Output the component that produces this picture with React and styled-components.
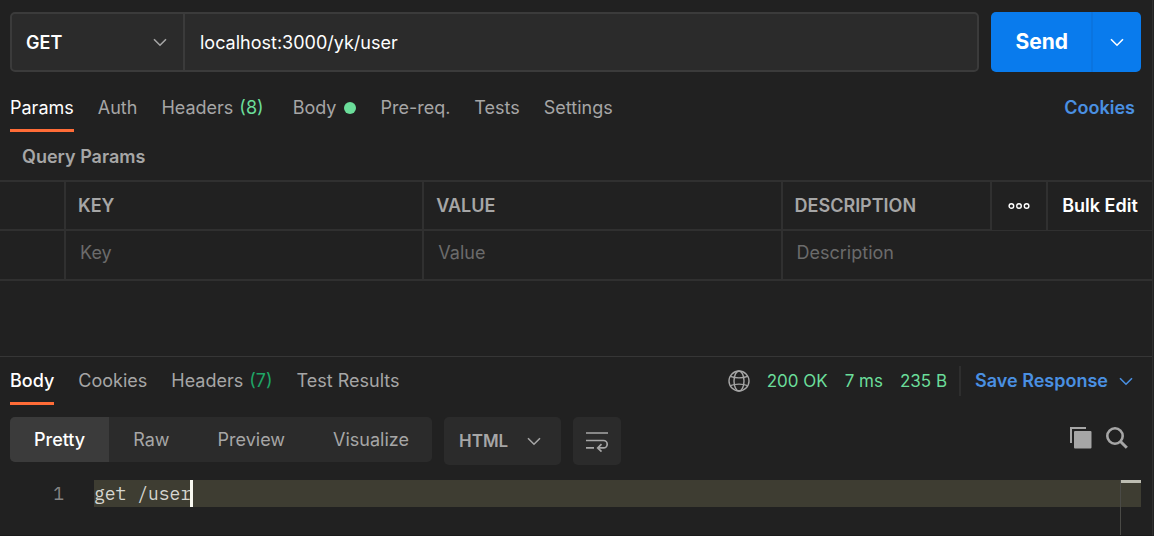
import React, { useState } from 'react';
import styled, { createGlobalStyle } from 'styled-components';

const GlobalStyle = createGlobalStyle`
  * {
    box-sizing: border-box;
  }

  body {
    margin: 0;
    background-color: #212121;
    color: #a6a6a6;
    font-family: Inter, 'Liberation Sans', sans-serif;
    font-size: 18px;
    line-height: 24px;
  }

  button,
  input,
  select {
    margin: 0;
    padding: 0;
    border: none;
    background: none;
    color: inherit;
    font: inherit;
    outline: none;
  }

  button,
  select {
    cursor: pointer;
  }
`;

const Page = styled.main`
  display: flex;
  flex-direction: column;
  min-height: 100vh;
  margin-right: 1px;
  border-right: 1px solid #2f2f2f;
  border-bottom: 1px solid #1a1a1a;
`;

const RequestBar = styled.form`
  display: flex;
  gap: 12px;
  padding: 12px 11px 12px 10px;
`;

const UrlBox = styled.div`
  display: flex;
  flex: 1;
  height: 60px;
  background-color: #2b2b2b;
  border: 2px solid #3b3b3b;
  border-radius: 5px;
`;

const SelectFrame = styled.div`
  display: grid;
  align-items: center;
  flex-shrink: 0;
  width: ${props => props.$width}px;

  > * {
    grid-area: 1 / 1;
  }

  > svg {
    justify-self: end;
    margin-right: 16px;
    pointer-events: none;
  }
`;

const MethodFrame = styled(SelectFrame)`
  color: #fff;
  border-right: 2px solid #3b3b3b;

  > svg {
    color: #a6a6a6;
  }
`;

const Select = styled.select`
  appearance: none;
  width: 100%;
  height: 100%;
  padding-top: ${props => (props.$small ? 0 : 2)}px;
  padding-left: ${props => (props.$small ? 15 : 14)}px;
  font-size: ${props => (props.$small ? 17 : 18)}px;
  font-weight: 600;
`;

const UrlInput = styled.input`
  flex: 1;
  min-width: 0;
  padding: 2px 15px 0;
  color: #fff;
`;

const SendGroup = styled.div`
  display: flex;
  background-color: #097bed;
  border-radius: 5px;
  color: #fff;
`;

const SendButton = styled.button`
  padding: 0 23px 0 24px;
  font-size: 21px;
  font-weight: 700;
`;

const SendMore = styled.button`
  display: flex;
  align-items: center;
  justify-content: center;
  width: 50px;
  border-left: 2px solid #0a74e0;
`;

const TabBar = styled.div`
  display: flex;
  align-items: center;
  justify-content: space-between;
  padding: 0 17px 0 10px;
`;

const Tabs = styled.div`
  display: flex;
  gap: 24px;
`;

const Tab = styled.button`
  display: flex;
  align-items: center;
  height: 48px;
  padding-top: 3px;
  border-bottom: 3px solid ${props => (props.$active ? '#ff6c37' : 'transparent')};
  color: ${props => (props.$active ? '#fff' : '#a6a6a6')};
  font-weight: ${props => (props.$strong && props.$active ? 500 : 400)};
  white-space: nowrap;
`;

const Count = styled.span`
  margin-left: 6px;
  margin-right: ${props => (props.$spaced ? 5 : 0)}px;
  color: ${props => props.$color};
`;

const Dot = styled.span`
  width: 12px;
  height: 12px;
  margin-left: 8px;
  border-radius: 50%;
  background-color: #6bdd9a;
`;

const CookiesLink = styled.a`
  color: #4a90e2;
  font-weight: 600;
  text-decoration: none;
`;

const SectionTitle = styled.h2`
  margin: 0;
  padding: 13px 22px 11px;
  font-size: 18px;
  font-weight: 600;
  line-height: 24px;
`;

const ParamsTable = styled.table`
  width: 100%;
  table-layout: fixed;
  border-collapse: separate;
  border-spacing: 0;
  border-top: 2px solid #303030;

  th,
  td {
    padding: 0 12px;
    border-bottom: 2px solid #303030;
    border-left: 2px solid #303030;
    text-align: left;
  }

  th {
    height: 49px;
    font-weight: 600;
  }

  td {
    height: 50px;
    padding-bottom: 4px;
  }

  th:first-child,
  td:first-child {
    border-left: none;
  }
`;

const ActionCell = styled.th`
  && {
    padding: 0;
    border-bottom-width: 1px;
  }
`;

const CellButton = styled.button`
  display: flex;
  align-items: center;
  justify-content: center;
  width: 100%;
  height: 46px;
  color: #fff;
  font-weight: 600;
  white-space: nowrap;
`;

const CellInput = styled.input`
  display: block;
  width: 100%;
  padding-left: 2px;

  &::placeholder {
    color: #6b6b6b;
    opacity: 1;
  }
`;

const Response = styled.section`
  display: flex;
  flex: 1;
  flex-direction: column;
  margin-top: 75px;
  border-top: 1px solid #363636;
`;

const Status = styled.div`
  display: flex;
  align-items: center;
  gap: 17px;
  color: #6bdd9a;
  font-size: 17px;
  white-space: nowrap;
`;

const GlobeButton = styled.button`
  display: flex;
  color: #a6a6a6;
`;

const SaveButton = styled.button`
  display: flex;
  align-items: center;
  gap: 11px;
  height: 30px;
  margin-left: -5px;
  padding: 0 2px 0 14px;
  border-left: 2px solid #2e2e2e;
  color: #4a90e2;
  font-size: 18px;
  font-weight: 600;
`;

const Toolbar = styled.div`
  display: flex;
  align-items: flex-start;
  gap: 12px;
  padding: 12px 23px 15px 10px;
`;

const Segments = styled.div`
  display: flex;
  overflow: hidden;
  border-radius: 5px;
  background-color: #2b2b2b;
`;

const Segment = styled.button`
  height: 45px;
  padding: 0 24px;
  background-color: ${props => (props.$active ? '#3b3b3b' : 'transparent')};
  color: ${props => (props.$active ? '#fff' : '#a6a6a6')};
  font-weight: ${props => (props.$active ? 500 : 400)};

  &:last-child {
    padding-right: 23px;
  }
`;

const LanguageFrame = styled(SelectFrame)`
  height: 48px;
  border-radius: 5px;
  background-color: #2b2b2b;

  > svg {
    margin-right: 20px;
  }
`;

const WrapButton = styled.button`
  display: flex;
  align-items: center;
  justify-content: center;
  width: 48px;
  height: 48px;
  border-radius: 5px;
  background-color: #2b2b2b;
`;

const Tools = styled.div`
  display: flex;
  gap: 12px;
  margin-left: auto;
  padding-top: 9px;
`;

const ToolButton = styled.button`
  display: flex;
`;

const Editor = styled.div`
  display: flex;
  flex: 1;
  padding-right: 11px;
  font-family: 'IBM Plex Mono', 'Liberation Mono', monospace;
  line-height: 27px;
`;

const LineNumber = styled.div`
  width: 94px;
  padding-right: 30px;
  color: #858585;
  text-align: right;
`;

const CodeLine = styled.div`
  display: flex;
  flex: 1;
  height: 27px;
  background-color: #3e3d32;
  color: #d6d6d0;
`;

const Caret = styled.span`
  width: 3px;
  height: 27px;
  margin-left: -1px;
  background-color: #f8f8f0;
`;

const Ruler = styled.div`
  width: 21px;
  border-left: 1px solid #4a4a46;
`;

const RulerMark = styled.div`
  height: 27px;
  border-top: 3px solid #bdbdb2;
  background-color: #3e3d32;
`;

function Chevron() {
  return (
    <svg width="14" height="9" viewBox="0 0 14 9" fill="none" aria-hidden="true">
      <path d="M1 1.2l6 6 6-6" stroke="currentColor" strokeWidth="1.6" />
    </svg>
  );
}

function MoreIcon() {
  return (
    <svg width="22" height="8" viewBox="0 0 22 8" fill="none" stroke="currentColor" strokeWidth="1.4">
      <circle cx="3.4" cy="4" r="2.3" />
      <circle cx="11" cy="4" r="2.3" />
      <circle cx="18.6" cy="4" r="2.3" />
    </svg>
  );
}

function GlobeIcon() {
  return (
    <svg width="22" height="22" viewBox="0 0 22 22" fill="none" stroke="currentColor" strokeWidth="1.4">
      <circle cx="11" cy="11" r="10" />
      <ellipse cx="11" cy="11" rx="5" ry="10" />
      <path d="M2.2 6.4c5 1.7 12.6 1.7 17.6 0M2.2 15.6c5-1.7 12.6-1.7 17.6 0" />
    </svg>
  );
}

function WrapIcon() {
  return (
    <svg width="24" height="22" viewBox="0 0 24 22" fill="none" stroke="currentColor" strokeWidth="1.7">
      <path d="M1 3h22M1 10.5h17.5a3.7 3.7 0 0 1 0 7.4H13M1 17.9h8" />
      <path d="M16.5 14.2l-3.8 3.7 3.8 3.7" />
    </svg>
  );
}

function CopyIcon() {
  return (
    <svg width="24" height="24" viewBox="0 0 24 24" fill="currentColor">
      <path d="M1 1h16v2H3v14H1z" />
      <rect x="5" y="5" width="17.5" height="17.5" rx="1" />
    </svg>
  );
}

function SearchIcon() {
  return (
    <svg width="24" height="24" viewBox="0 0 24 24" fill="none" stroke="currentColor" strokeWidth="2.6">
      <circle cx="10" cy="10" r="7.7" />
      <path d="M15.5 15.5l6.3 6.3" strokeWidth="3" />
    </svg>
  );
}

const requestTabs = [
  { name: 'Params' },
  { name: 'Auth' },
  { name: 'Headers', count: 8 },
  { name: 'Body', dot: true },
  { name: 'Pre-req.' },
  { name: 'Tests' },
  { name: 'Settings' }
];

const responseTabs = [
  { name: 'Body' },
  { name: 'Cookies' },
  { name: 'Headers', count: 7 },
  { name: 'Test Results' }
];

const views = ['Pretty', 'Raw', 'Preview', 'Visualize'];

function TabList(props) {
  const { tabs, label, countColor, spaced, strong } = props;
  const [active, setActive] = useState(tabs[0].name);

  return (
    <Tabs role="tablist" aria-label={label}>
      {tabs.map(({ name, count, dot }) => (
        <Tab
          key={name}
          type="button"
          role="tab"
          aria-selected={name === active}
          $active={name === active}
          $strong={strong}
          onClick={() => setActive(name)}
        >
          {name}
          {count && (
            <Count $color={countColor} $spaced={spaced}>
              ({count})
            </Count>
          )}
          {dot && <Dot />}
        </Tab>
      ))}
    </Tabs>
  );
}

const Column = styled.col`
  width: ${props => props.$width};
`;

function Params() {
  return (
    <ParamsTable>
      <colgroup>
        <Column $width="64px" />
        <Column $width="31.1%" />
        <Column $width="31.1%" />
        <Column $width="auto" />
        <Column $width="56px" />
        <Column $width="106px" />
      </colgroup>
      <thead>
        <tr>
          <th />
          <th>KEY</th>
          <th>VALUE</th>
          <th>DESCRIPTION</th>
          <ActionCell>
            <CellButton type="button" aria-label="More options">
              <MoreIcon />
            </CellButton>
          </ActionCell>
          <ActionCell>
            <CellButton type="button">Bulk Edit</CellButton>
          </ActionCell>
        </tr>
      </thead>
      <tbody>
        <tr>
          <td />
          <td>
            <CellInput aria-label="Key" placeholder="Key" />
          </td>
          <td>
            <CellInput aria-label="Value" placeholder="Value" />
          </td>
          <td colSpan="3">
            <CellInput aria-label="Description" placeholder="Description" />
          </td>
        </tr>
      </tbody>
    </ParamsTable>
  );
}

function ResponsePanel() {
  const [view, setView] = useState('Pretty');

  return (
    <Response>
      <TabBar>
        <TabList tabs={responseTabs} label="Response" countColor="#1fa566" strong />
        <Status>
          <GlobeButton type="button" aria-label="Network">
            <GlobeIcon />
          </GlobeButton>
          <span>200 OK</span>
          <span>7 ms</span>
          <span>235 B</span>
          <SaveButton type="button">
            Save Response
            <Chevron />
          </SaveButton>
        </Status>
      </TabBar>
      <Toolbar>
        <Segments>
          {views.map(name => (
            <Segment key={name} type="button" $active={name === view} onClick={() => setView(name)}>
              {name}
            </Segment>
          ))}
        </Segments>
        <LanguageFrame $width={117}>
          <Select aria-label="Language" defaultValue="HTML" $small>
            <option>HTML</option>
            <option>JSON</option>
            <option>Text</option>
          </Select>
          <Chevron />
        </LanguageFrame>
        <WrapButton type="button" aria-label="Wrap lines">
          <WrapIcon />
        </WrapButton>
        <Tools>
          <ToolButton type="button" aria-label="Copy">
            <CopyIcon />
          </ToolButton>
          <ToolButton type="button" aria-label="Search">
            <SearchIcon />
          </ToolButton>
        </Tools>
      </Toolbar>
      <Editor>
        <LineNumber>1</LineNumber>
        <CodeLine>
          get /user
          <Caret />
        </CodeLine>
        <Ruler>
          <RulerMark />
        </Ruler>
      </Editor>
    </Response>
  );
}

export default function App() {
  return (
    <>
      <GlobalStyle />
      <Page>
        <RequestBar onSubmit={event => event.preventDefault()}>
          <UrlBox>
            <MethodFrame $width={173}>
              <Select aria-label="Method" defaultValue="GET">
                <option>GET</option>
                <option>POST</option>
                <option>PUT</option>
                <option>DELETE</option>
              </Select>
              <Chevron />
            </MethodFrame>
            <UrlInput aria-label="Request URL" defaultValue="localhost:3000/yk/user" />
          </UrlBox>
          <SendGroup>
            <SendButton type="submit">Send</SendButton>
            <SendMore type="button" aria-label="Send options">
              <Chevron />
            </SendMore>
          </SendGroup>
        </RequestBar>
        <TabBar>
          <TabList tabs={requestTabs} label="Request" countColor="#6bdd9a" spaced />
          <CookiesLink href="#cookies">Cookies</CookiesLink>
        </TabBar>
        <SectionTitle>Query Params</SectionTitle>
        <Params />
        <ResponsePanel />
      </Page>
    </>
  );
}
